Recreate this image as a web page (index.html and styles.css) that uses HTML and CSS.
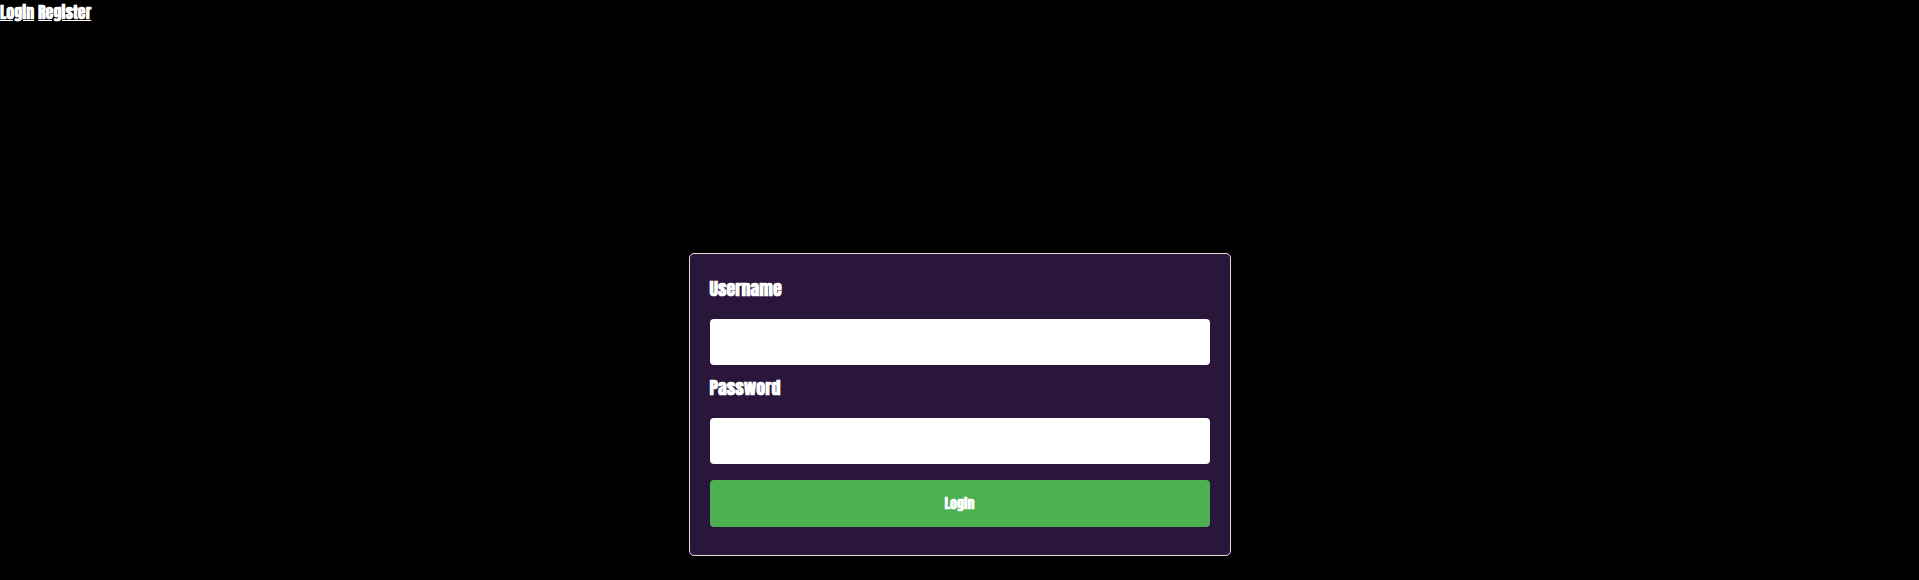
FILE: index.html
```html
<!DOCTYPE html>
<html lang="en">
<head>
<meta charset="utf-8">
<title>Login</title>
<link rel="stylesheet" href="styles.css">
</head>
<body>
<nav class="topnav"><a href="#" class="navlink">Login</a> <a href="#" class="navlink">Register</a></nav>
<main class="stage">
  <form class="card">
    <label class="field-label" for="username">Username</label>
    <input class="field-input" id="username" type="text">
    <label class="field-label" for="password">Password</label>
    <input class="field-input" id="password" type="password">
    <button class="submit" type="button">Login</button>
  </form>
</main>
</body>
</html>
```
FILE: styles.css
```css
html, body {
  margin: 0;
  padding: 0;
  background: #000;
  height: 100%;
}
body {
  font-family: "Anton", "Liberation Sans Narrow", "DejaVu Sans Condensed", "Liberation Sans", sans-serif;
  font-weight: bold;
  color: #fff;
}
.topnav {
  height: 24px;
  font-size: 16px;
  line-height: 24px;
}
.navlink {
  color: #fff;
  text-decoration: underline;
}
.stage {
  display: flex;
  justify-content: center;
  padding-top: 229px;
}
.card {
  box-sizing: border-box;
  width: 542px;
  background: #2a163b;
  border: 1px solid #ddd;
  border-radius: 5px;
  padding: 20px;
  display: flex;
  flex-direction: column;
}
.field-label {
  display: block;
  height: 45px;
  font-size: 18px;
  line-height: 30px;
  color: #fff;
}
.field-input {
  box-sizing: border-box;
  height: 46px;
  width: 100%;
  margin: 0 0 8px;
  border: none;
  border-radius: 4px;
  background: #fff;
}
.submit {
  height: 47px;
  margin: 8px 0 8px;
  border: none;
  border-radius: 4px;
  background: #4caf50;
  color: #fff;
  font-family: inherit;
  font-weight: bold;
  font-size: 14px;
}
```
